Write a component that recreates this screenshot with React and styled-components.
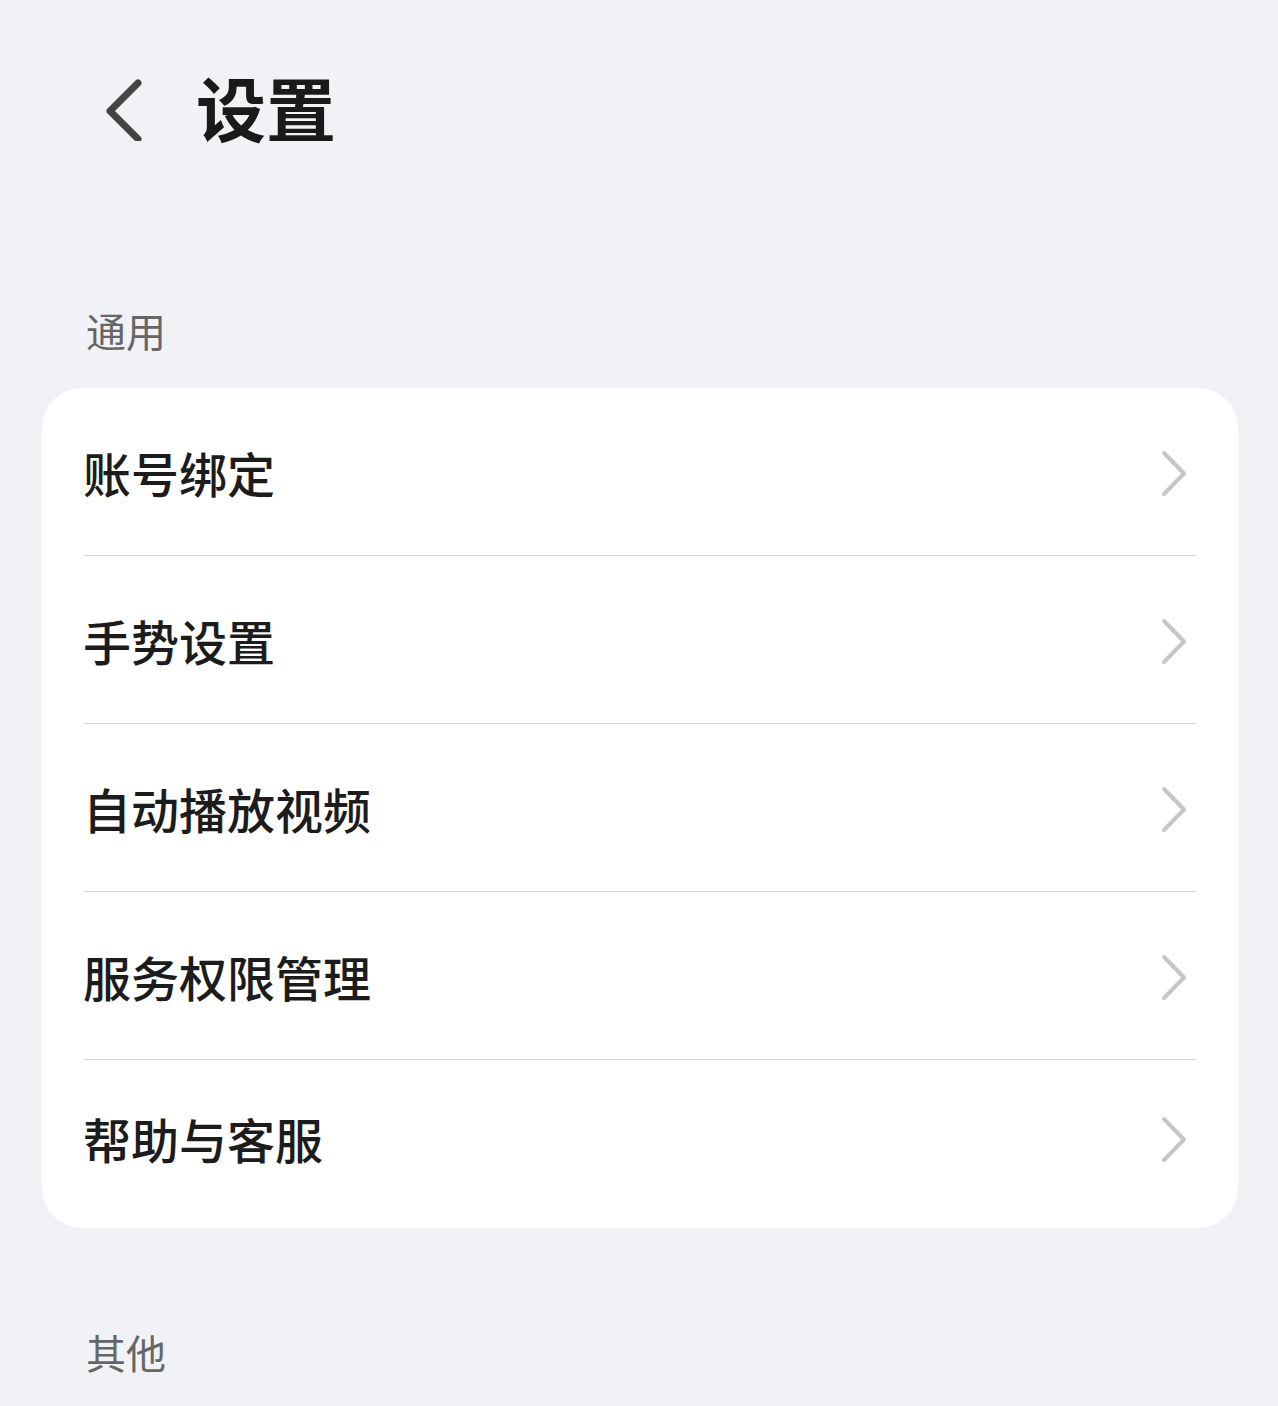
import React from "react";
import styled, { createGlobalStyle } from "styled-components";

const Global = createGlobalStyle`
  html, body { margin: 0; padding: 0; background: #f1f2f6; }
  body { font-family: "Noto Sans CJK SC", "Noto Sans", sans-serif; }
`;

const Page = styled.div`
  padding: 0 40px 40px 42px;
  background: #f1f2f6;
  min-height: 1406px;
  box-sizing: border-box;
`;

const Header = styled.div`
  height: 214px;
  display: flex;
  align-items: center;
  padding-left: 60px;
  gap: 50px;
`;

const BackButton = styled.button`
  border: 0;
  background: none;
  padding: 0;
  display: flex;
  align-items: center;
  cursor: pointer;
`;

const Title = styled.h1`
  margin: 0;
  font-size: 70px;
  line-height: 1;
  font-weight: 700;
  color: #1a1a1a;
`;

const SectionLabel = styled.div`
  margin: ${(p) => p.$top}px 0 ${(p) => p.$bottom}px 44px;
  font-size: 40px;
  line-height: 40px;
  color: #666;
`;

const Card = styled.div`
  background: #fff;
  border-radius: 40px;
  padding: 0 42px;
`;

const Row = styled.div`
  height: 167px;
  display: flex;
  align-items: center;
  justify-content: space-between;
  border-bottom: 1px solid #d8d8d8;
  &:last-child {
    border-bottom: 0;
    height: 156px;
    padding-bottom: 12px;
  }
`;

const RowText = styled.span`
  font-size: 48px;
  line-height: 1;
  color: #1c1c1c;
  font-weight: 500;
  margin-left: -1px;
`;

const Chevron = styled.svg`
  margin-right: 8px;
  margin-top: 4px;
`;

const items = ["账号绑定", "手势设置", "自动播放视频", "服务权限管理", "帮助与客服"];

export default function App() {
  return (
    <>
      <Global />
      <Page>
        <Header>
          <BackButton aria-label="返回">
            <svg width="44" height="68" viewBox="0 0 44 68">
              <polyline points="36,10 8,38 36,66" fill="none" stroke="#444" strokeWidth="7" strokeLinecap="round" strokeLinejoin="round" />
            </svg>
          </BackButton>
          <Title>设置</Title>
        </Header>
        <SectionLabel $top={96} $bottom={38}>通用</SectionLabel>
        <Card>
          {items.map((t) => (
            <Row key={t}>
              <RowText>{t}</RowText>
              <Chevron width="28" height="48" viewBox="0 0 28 48">
                <polyline points="4,3 24,23.5 4,44" fill="none" stroke="#c6c6c6" strokeWidth="4" strokeLinecap="round" strokeLinejoin="round" />
              </Chevron>
            </Row>
          ))}
        </Card>
        <SectionLabel $top={104} $bottom={0}>其他</SectionLabel>
      </Page>
    </>
  );
}
